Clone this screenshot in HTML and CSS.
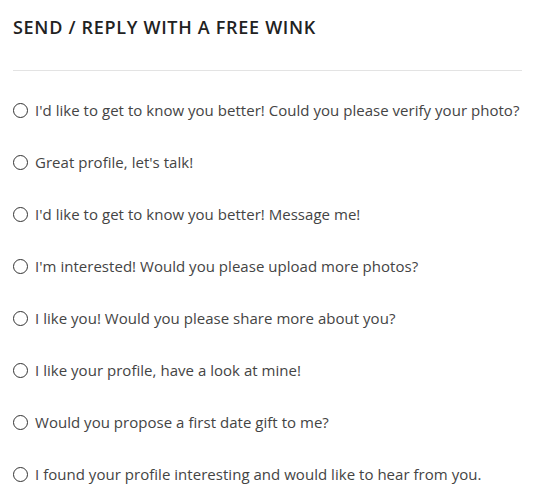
FILE: index.html
```html
<!DOCTYPE html>
<html>
<head>
<meta charset="utf-8">
<link rel="stylesheet" href="styles.css">
</head>
<body>
<div class="panel">
  <h1 class="title">SEND / REPLY WITH A FREE WINK</h1>
  <hr class="divider">
  <ul class="options">
    <li class="option"><span class="radio"></span><span class="label">I'd like to get to know you better! Could you please verify your photo?</span></li>
    <li class="option"><span class="radio"></span><span class="label">Great profile, let's talk!</span></li>
    <li class="option"><span class="radio"></span><span class="label">I'd like to get to know you better! Message me!</span></li>
    <li class="option"><span class="radio"></span><span class="label">I'm interested! Would you please upload more photos?</span></li>
    <li class="option"><span class="radio"></span><span class="label">I like you! Would you please share more about you?</span></li>
    <li class="option"><span class="radio"></span><span class="label">I like your profile, have a look at mine!</span></li>
    <li class="option"><span class="radio"></span><span class="label">Would you propose a first date gift to me?</span></li>
    <li class="option"><span class="radio"></span><span class="label">I found your profile interesting and would like to hear from you.</span></li>
  </ul>
</div>
</body>
</html>
```
FILE: styles.css
```css
html, body {
  margin: 0;
  padding: 0;
  background: #ffffff;
}
.panel {
  width: 509px;
  padding-left: 13px;
  font-family: "Open Sans", "Noto Sans", sans-serif;
  color: #333333;
}
.title {
  margin: 0;
  padding-top: 15px;
  font-size: 18px;
  line-height: 24px;
  font-weight: 600;
  color: #222222;
  letter-spacing: 0.7px;
}
.divider {
  margin: 31px 0 0 0;
  border: 0;
  border-top: 1px solid #e3e3e3;
  height: 0;
}
.options {
  list-style: none;
  margin: 0;
  padding: 0;
  padding-top: 29px;
  display: flex;
  flex-direction: column;
  gap: 32px;
}
.option {
  display: flex;
  align-items: center;
  height: 20px;
  font-size: 15px;
  line-height: 20px;
  color: #444444;
}
.radio {
  box-sizing: border-box;
  width: 15px;
  height: 15px;
  border: 1.4px solid #333333;
  border-radius: 50%;
  flex: none;
  margin-left: 0;
  margin-right: 7px;
}
.label {
  white-space: nowrap;
  letter-spacing: 0.03px;
}
```
